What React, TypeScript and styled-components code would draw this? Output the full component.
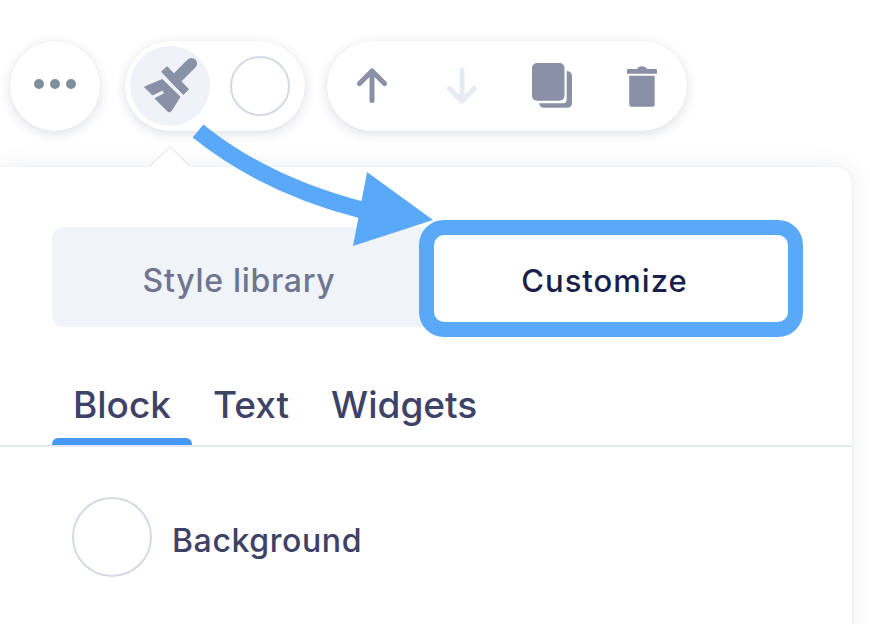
import React from 'react'
import styled, { createGlobalStyle } from 'styled-components'

const GlobalStyle = createGlobalStyle`
  html, body {
    margin: 0;
    height: 100%;
    background: #fff;
    overflow: hidden;
  }
  #root {
    height: 100%;
  }
`

const BrushIcon = () => (
  <svg width='80' height='80' viewBox='0 0 80 80' fill='#8a90a5'>
    <path d='M46.7 32.3 61.5 17.5' stroke='#8a90a5' strokeWidth='11' strokeLinecap='round' />
    <path d='M31.5 25.7 37.2 20.7 58.5 43.3 53.3 48.5Z' stroke='#8a90a5' strokeWidth='1' strokeLinejoin='round' />
    <path
      d='M14.5 41 32.3 33.5 50 50.7 41.5 64.5Q39.5 67 37.5 65L25 52.5 34.5 47.5 32.7 44 22.5 49Z'
      stroke='#8a90a5'
      strokeWidth='1'
      strokeLinejoin='round'
    />
  </svg>
)

const ArrowIcon = ({ $color, down }: { $color: string; down?: boolean }) => (
  <svg width='32' height='36' viewBox='0 0 32 36' fill='none' stroke={$color} strokeWidth='5' strokeLinecap='round' strokeLinejoin='round'>
    {down ? <path d='M16 2.5V33M3.5 20.5 16 33 28.5 20.5' /> : <path d='M16 32.5V3M3.5 15.5 16 3 28.5 15.5' />}
  </svg>
)

const CopyIcon = () => (
  <svg width='42' height='46' viewBox='0 0 42 46' fill='#8a90a5'>
    <rect x='1' y='0' width='32.5' height='37.7' rx='5' />
    <path d='M35.7 7.7Q41 8.5 41 13.5V40Q41 44.7 36 44.7H13Q8.7 44.7 8 40.3H32Q35.7 40.3 35.7 36Z' />
  </svg>
)

const TrashIcon = () => (
  <svg width='32' height='42' viewBox='0 0 32 42' fill='#8a90a5'>
    <path d='M2 4H11Q12.5 1.2 16 1.2Q19.5 1.2 21 4H30Q31 4 31 5V8.7H1V5Q1 4 2 4Z' />
    <path d='M3.2 10.7H28.7V39.5Q28.7 41.7 26.5 41.7H5.4Q3.2 41.7 3.2 39.5Z' />
  </svg>
)

const Callout = () => (
  <CalloutSvg width='870' height='624' viewBox='0 0 870 624' fill='none'>
    <path d='M198 131Q265 185 362 210' stroke='#5aa9f9' strokeWidth='17' />
    <path d='M367 172 433 220 353 246Z' fill='#5aa9f9' />
  </CalloutSvg>
)

export default function App() {
  return (
    <Page>
      <GlobalStyle />
      <Toolbar>
        <MoreButton>
          <Dot />
          <Dot />
          <Dot />
        </MoreButton>
        <StyleGroup>
          <BrushButton>
            <BrushIcon />
          </BrushButton>
          <Swatch $size={60} />
        </StyleGroup>
        <ActionGroup>
          <ActionSlot>
            <ArrowIcon $color='#8a90a5' />
          </ActionSlot>
          <ActionSlot>
            <ArrowIcon $color='#e4ebf3' down />
          </ActionSlot>
          <ActionSlot>
            <CopyIcon />
          </ActionSlot>
          <ActionSlot>
            <TrashIcon />
          </ActionSlot>
        </ActionGroup>
      </Toolbar>
      <Panel>
        <Notch />
        <Segment>
          <SegmentItem>Style library</SegmentItem>
          <SegmentItemActive>Customize</SegmentItemActive>
        </Segment>
        <Tabs>
          <Tab $active>Block</Tab>
          <Tab>Text</Tab>
          <Tab>Widgets</Tab>
        </Tabs>
        <ColorRow>
          <Swatch $size={80} />
          <ColorLabel>Background</ColorLabel>
        </ColorRow>
      </Panel>
      <Callout />
    </Page>
  )
}

const Page = styled.div`
  position: relative;
  width: 870px;
  height: 624px;
  overflow: hidden;
  padding-top: 41px;
  box-sizing: border-box;
  font-family: Inter, 'Noto Sans', sans-serif;
`

const Toolbar = styled.div`
  display: flex;
  align-items: center;
  padding-left: 10px;
  height: 90px;
`

const Pill = styled.div`
  display: flex;
  align-items: center;
  height: 90px;
  border-radius: 45px;
  background: #fff;
  box-shadow: 0 3px 12px rgba(30, 40, 80, 0.14), 0 0 1px rgba(30, 40, 80, 0.1);
`

const MoreButton = styled(Pill)`
  width: 90px;
  box-sizing: border-box;
  padding-bottom: 4px;
  justify-content: center;
  gap: 6px;
  margin-right: 25px;
`

const Dot = styled.span`
  width: 10px;
  height: 10px;
  border-radius: 50%;
  background: #7f8e9d;
`

const StyleGroup = styled(Pill)`
  width: 180px;
  box-sizing: border-box;
  padding-left: 5px;
  gap: 20px;
  margin-right: 22px;
`

const BrushButton = styled.div`
  width: 80px;
  height: 80px;
  border-radius: 50%;
  background: #eff3f9;
`

const Swatch = styled.div<{ $size: number }>`
  width: ${({ $size }) => $size}px;
  height: ${({ $size }) => $size}px;
  flex: none;
  box-sizing: border-box;
  border-radius: 50%;
  border: 2px solid #d5d9e5;
  background: #fff;
`

const ActionGroup = styled(Pill)`
  width: 360px;
  justify-content: center;
`

const ActionSlot = styled.div`
  display: flex;
  justify-content: center;
  width: 90px;
`

const Panel = styled.div`
  position: relative;
  width: 852px;
  height: 500px;
  margin-top: 36px;
  box-sizing: border-box;
  padding-top: 60px;
  background: #fff;
  border-radius: 0 16px 0 0;
  box-shadow: 0 0 24px rgba(30, 40, 80, 0.08), 0 0 2px rgba(30, 40, 80, 0.1);
`

const Notch = styled.div`
  position: absolute;
  top: -14px;
  left: 156px;
  width: 28px;
  height: 28px;
  background: #fff;
  transform: rotate(45deg);
  box-shadow: -1px -1px 1px rgba(30, 40, 80, 0.1);
`

const Segment = styled.div`
  display: flex;
  height: 100px;
  margin: 0 56px 0 52px;
  box-sizing: border-box;
  padding: 8px 8px 5px 0;
  border-radius: 12px;
  background: #f0f3f8;
`

const SegmentItem = styled.div`
  display: flex;
  align-items: center;
  justify-content: center;
  width: 382px;
  box-sizing: border-box;
  padding: 3px 8px 0 0;
  font-size: 32px;
  letter-spacing: 0.7px;
  font-weight: 500;
  color: #6f7590;
`

const SegmentItemActive = styled(SegmentItem)`
  flex: 1;
  width: auto;
  padding-right: 13px;
  border-radius: 10px;
  background: #fff;
  color: #1a1e4b;
  font-size: 31px;
  letter-spacing: 1px;
  outline: 15px solid #5aa9f9;
`

const Tabs = styled.div`
  display: flex;
  height: 120px;
  padding-left: 52px;
  box-sizing: border-box;
  border-bottom: 2px solid #e3e8f2;
`

const Tab = styled.div<{ $active?: boolean }>`
  position: relative;
  box-sizing: border-box;
  padding: 50px 21px 0;
  font-size: 37px;
  line-height: 56px;
  font-weight: 500;
  color: #3d4266;

  &::after {
    content: '';
    display: ${({ $active }) => ($active ? 'block' : 'none')};
    position: absolute;
    left: 0;
    right: 0;
    bottom: 0;
    height: 7px;
    border-radius: 6px 6px 0 0;
    background: #4598f5;
  }
`

const ColorRow = styled.div`
  display: flex;
  align-items: center;
  gap: 20px;
  margin-top: 50px;
  padding-left: 72px;
`

const ColorLabel = styled.div`
  padding-top: 6px;
  font-size: 32px;
  letter-spacing: 0.6px;
  font-weight: 500;
  color: #3d4266;
`

const CalloutSvg = styled.svg`
  position: absolute;
  top: 0;
  left: 0;
  pointer-events: none;
`
